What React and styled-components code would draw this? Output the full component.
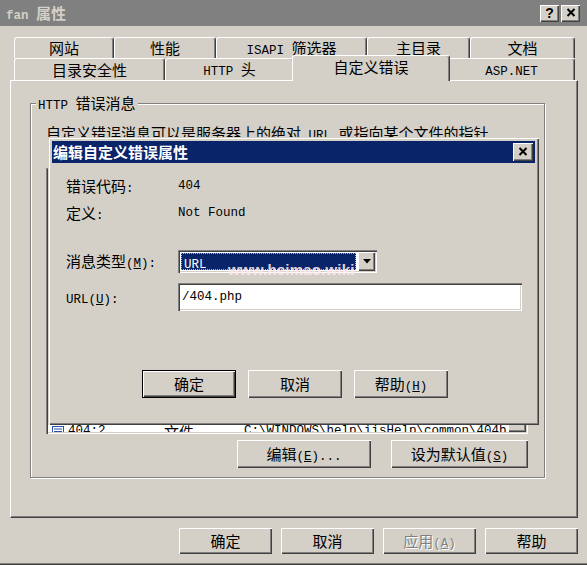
import React from 'react';
import styled, { createGlobalStyle } from 'styled-components';

const GlobalStyle = createGlobalStyle`
  * { box-sizing: border-box; }
  html, body { margin: 0; padding: 0; background: #d4d0c8; }
  body {
    font-family: "Noto Sans CJK SC", "Liberation Sans", sans-serif;
    font-size: 15px;
    color: #000;
  }
`;

const raised = `
  box-shadow: inset 1px 1px 0 #fff, inset -1px -1px 0 #404040, inset -2px -2px 0 #808080;
`;
const sunken = `
  box-shadow: inset 1px 1px 0 #808080, inset 2px 2px 0 #404040, inset -1px -1px 0 #fff, inset -2px -2px 0 #d4d0c8;
`;

const Lat = styled.span`
  font-family: "Liberation Mono", "DejaVu Sans Mono", monospace;
  font-size: 12.5px;
  line-height: 1;
`;

const Window = styled.div`
  position: relative;
  width: 587px;
  height: 565px;
  background: #d4d0c8;
  box-shadow: inset 0 -1px 0 #404040, inset 0 -2px 0 #808080;
  overflow: hidden;
`;

const TitleBar = styled.div`
  height: 26px;
  background: #808080;
  display: flex;
  align-items: center;
  justify-content: space-between;
  padding: 0 7px 0 6px;
`;

const TitleText = styled.div`
  color: #d4d0c8;
  font-weight: bold;
  line-height: 18px;
`;

const CapButtons = styled.div`
  display: flex;
  gap: 2px;
`;

const CapButton = styled.div`
  width: 19px;
  height: 17px;
  background: #d4d0c8;
  ${raised}
  display: flex;
  align-items: center;
  justify-content: center;
  font-family: "Liberation Sans", sans-serif;
  font-weight: bold;
  font-size: 14px;
  line-height: 1;
  padding-bottom: 1px;
`;

const TabStrip = styled.div`
  display: flex;
  flex-direction: column;
  margin-top: 11px;
  padding-left: 14px;
`;

const TabRow = styled.div`
  display: flex;
  height: ${p => p.h}px;
`;

const Tab = styled.div`
  position: relative;
  flex: none;
  width: ${p => p.w}px;
  display: flex;
  align-items: center;
  justify-content: center;
  line-height: 18px;
  white-space: nowrap;
  background: #d4d0c8;
  border-top: 1px solid #fff;
  border-left: 1px solid #fff;
  border-right: 1px solid #404040;
  box-shadow: inset -1px 0 0 #808080;
  border-radius: 3px 3px 0 0;
  ${p => p.active && `
    z-index: 2;
    height: calc(100% + 4px);
    margin: -3px -2px -1px;
    padding-bottom: 4px;
  `}
`;

const Panel = styled.div`
  margin-left: 10px;
  width: 568px;
  height: 438px;
  border-top: 1px solid #fff;
  border-left: 1px solid #fff;
  border-right: 1px solid #404040;
  border-bottom: 1px solid #404040;
  box-shadow: inset -1px -1px 0 #808080;
  padding: 22px 32px 39px 19px;
  display: flex;
`;

const Group = styled.div`
  flex: 1;
  min-width: 0;
  border: 1px solid #808080;
  box-shadow: inset 1px 1px 0 #fff, 1px 1px 0 #fff;
  display: flex;
  flex-direction: column;
  padding: 0 16px 9px 15px;
`;

const Legend = styled.div`
  align-self: flex-start;
  height: 18px;
  margin: -10px 0 0 -10px;
  padding: 0 2px;
  background: #d4d0c8;
  line-height: 18px;
  white-space: nowrap;
`;

const Intro = styled.div`
  height: 18px;
  margin-top: 12px;
  line-height: 18px;
  white-space: nowrap;
`;

const ListView = styled.div`
  margin-top: 26px;
  height: 266px;
  flex: none;
  background: #fff;
  ${sunken}
  padding: 2px;
  display: flex;
  overflow: hidden;
`;

const ListMain = styled.div`
  flex: 1;
  min-width: 0;
  display: flex;
  flex-direction: column;
  overflow: hidden;
`;

const ListHeader = styled.div`
  display: flex;
  flex: none;
  height: 24px;
`;

const HeaderCell = styled.div`
  flex: ${p => (p.w ? 'none' : '1')};
  width: ${p => (p.w ? `${p.w}px` : 'auto')};
  background: #d4d0c8;
  ${raised}
  padding-left: 6px;
  line-height: 24px;
  white-space: nowrap;
`;

const ListRow = styled.div`
  display: flex;
  flex: none;
  height: 19px;
  line-height: 19px;
  white-space: nowrap;
  background: ${p => (p.selected ? '#0a246a' : '#fff')};
  color: ${p => (p.selected ? '#fff' : '#000')};
`;

const Cell = styled.div`
  flex: ${p => (p.w ? 'none' : '1')};
  width: ${p => (p.w ? `${p.w}px` : 'auto')};
  min-width: 0;
  display: flex;
  align-items: center;
  gap: 4px;
  padding-left: ${p => p.pl || 6}px;
  overflow: hidden;
`;

const VScroll = styled.div`
  width: 18px;
  flex: none;
  background: #e8e6e2;
  display: flex;
  flex-direction: column;
  justify-content: space-between;
`;

const ScrollPart = styled.div`
  height: ${p => p.h}px;
  background: #d4d0c8;
  ${raised}
`;

const ButtonRow = styled.div`
  display: flex;
  justify-content: ${p => (p.left ? 'flex-start' : 'flex-end')};
  gap: ${p => p.gap}px;
  margin-top: ${p => p.mt || 0}px;
  padding-left: ${p => p.pl || 0}px;
`;

const Button = styled.button`
  width: ${p => p.w}px;
  height: ${p => p.h}px;
  flex: none;
  padding: 0;
  margin: 0;
  border: ${p => (p.primary ? '1px solid #000' : 'none')};
  background: #d4d0c8;
  ${raised}
  font: inherit;
  font-size: 15px;
  line-height: 18px;
  color: ${p => (p.disabled ? '#808080' : '#000')};
  text-shadow: ${p => (p.disabled ? '1px 1px 0 #fff' : 'none')};
  white-space: nowrap;
`;

const Dialog = styled.div`
  position: absolute;
  left: 48px;
  top: 137px;
  width: 491px;
  height: 288px;
  background: #d4d0c8;
  box-shadow: inset 1px 1px 0 #d4d0c8, inset 2px 2px 0 #fff, inset -1px -1px 0 #404040, inset -2px -2px 0 #808080;
  padding: 4px;
  display: flex;
  flex-direction: column;
`;

const DlgTitle = styled.div`
  height: 22px;
  flex: none;
  background: #0a246a;
  color: #fff;
  font-weight: bold;
  display: flex;
  align-items: center;
  justify-content: space-between;
  padding: 0 2px 0 1px;
  line-height: 18px;
`;

const DlgBody = styled.div`
  padding: 13px 13px 0 14px;
  display: flex;
  flex-direction: column;
`;

const Field = styled.div`
  display: grid;
  grid-template-columns: 112px 1fr;
  align-items: center;
  height: ${p => p.h}px;
  margin-top: ${p => p.mt || 0}px;
  line-height: 18px;
  white-space: nowrap;
`;

const Combo = styled.div`
  width: 199px;
  height: 23px;
  background: #fff;
  ${sunken}
  padding: 2px;
  display: flex;
`;

const ComboValue = styled.div`
  flex: 1;
  margin: 1px 2px 1px 1px;
  background: #0a246a;
  color: #fff;
  outline: 1px dotted #c8b878;
  outline-offset: -1px;
  line-height: 17px;
  padding-left: 3px;
`;

const DropButton = styled.div`
  width: 17px;
  flex: none;
  background: #d4d0c8;
  ${raised}
  display: flex;
  align-items: center;
  justify-content: center;
`;

const TextBox = styled.div`
  height: 28px;
  background: #fff;
  ${sunken}
  display: flex;
  align-items: center;
  padding-left: 4px;
`;

const Watermark = styled.div`
  position: absolute;
  left: 180px;
  top: 124px;
  font-family: "Liberation Sans", sans-serif;
  font-weight: bold;
  font-size: 15px;
  line-height: 18px;
  color: rgba(255, 232, 236, 0.9);
  letter-spacing: 0.2px;
  white-space: nowrap;
`;

const Footer = styled.div`
  display: flex;
  justify-content: flex-end;
  gap: 9px;
  margin-top: 10px;
  padding-right: 9px;
`;

const CloseGlyph = () => (
  <svg width="10" height="9" viewBox="0 0 10 9">
    <path d="M1.5 1 L8.5 8 M8.5 1 L1.5 8" stroke="#000" strokeWidth="2" fill="none" />
  </svg>
);

const DownArrow = () => (
  <svg width="8" height="5" viewBox="0 0 8 5">
    <path d="M0 0 H8 L4 4.5 Z" fill="#000" />
  </svg>
);

const PageIcon = () => (
  <svg width="12" height="12" viewBox="0 0 12 12">
    <rect x="0.5" y="0.5" width="11" height="11" fill="#fff" stroke="#2850b0" />
    <path d="M2 3 H10 M2 5.5 H10 M2 8 H10" stroke="#2850b0" />
  </svg>
);

const rows = [
  ['403;9', '文件', 'C:\\WINDOWS\\help\\iisHelp\\common\\403-9.htm'],
  ['403;10', '文件', 'C:\\WINDOWS\\help\\iisHelp\\common\\403-10.htm'],
  ['403;11', '文件', 'C:\\WINDOWS\\help\\iisHelp\\common\\403-11.htm'],
  ['403;12', '文件', 'C:\\WINDOWS\\help\\iisHelp\\common\\403-12.htm'],
  ['403;13', '文件', 'C:\\WINDOWS\\help\\iisHelp\\common\\403-13.htm'],
  ['403;14', '文件', 'C:\\WINDOWS\\help\\iisHelp\\common\\403-14.htm'],
  ['403;15', '文件', 'C:\\WINDOWS\\help\\iisHelp\\common\\403-15.htm'],
  ['403;16', '文件', 'C:\\WINDOWS\\help\\iisHelp\\common\\403-16.htm'],
  ['403;17', '文件', 'C:\\WINDOWS\\help\\iisHelp\\common\\403-17.htm'],
  ['403;18', '文件', 'C:\\WINDOWS\\help\\iisHelp\\common\\403.htm'],
  ['403;19', '文件', 'C:\\WINDOWS\\help\\iisHelp\\common\\403.htm'],
  ['404', 'URL', '/404.php', true],
  ['404;2', '文件', 'C:\\WINDOWS\\help\\iisHelp\\common\\404b.htm'],
  ['404;3', '文件', 'C:\\WINDOWS\\help\\iisHelp\\common\\404b.htm'],
];

const topTabs = [
  ['网站', 100],
  ['性能', 102],
  [<><Lat>ISAPI </Lat>筛选器</>, 151],
  ['主目录', 103],
  ['文档', 105],
];

const App = () => (
  <>
    <GlobalStyle />
    <Window>
      <TitleBar>
        <TitleText><Lat style={{ fontWeight: 'bold' }}>fan </Lat>属性</TitleText>
        <CapButtons>
          <CapButton>?</CapButton>
          <CapButton><CloseGlyph /></CapButton>
        </CapButtons>
      </TitleBar>

      <TabStrip>
        <TabRow h={21}>
          {topTabs.map(([label, w], i) => (
            <Tab key={i} w={w}><span>{label}</span></Tab>
          ))}
        </TabRow>
        <TabRow h={22}>
          <Tab w={151}><span>目录安全性</span></Tab>
          <Tab w={129}><span><Lat>HTTP </Lat>头</span></Tab>
          <Tab w={158} active><span>自定义错误</span></Tab>
          <Tab w={127}><span><Lat>ASP.NET</Lat></span></Tab>
        </TabRow>
      </TabStrip>

      <Panel>
        <Group>
          <Legend><Lat>HTTP </Lat>错误消息</Legend>
          <Intro>自定义错误消息可以是服务器上的绝对<Lat> URL </Lat>或指向某个文件的指针</Intro>
          <ListView>
            <ListMain>
              <ListHeader>
                <HeaderCell w={110}><Lat>HTTP </Lat>错误</HeaderCell>
                <HeaderCell w={80}>类型</HeaderCell>
                <HeaderCell>内容</HeaderCell>
              </ListHeader>
              {rows.map(([code, type, content, sel]) => (
                <ListRow key={code} selected={sel}>
                  <Cell w={110} pl={4}><PageIcon /><Lat>{code}</Lat></Cell>
                  <Cell w={80}>{type === 'URL' ? <Lat>URL</Lat> : type}</Cell>
                  <Cell><Lat>{content}</Lat></Cell>
                </ListRow>
              ))}
            </ListMain>
            <VScroll>
              <ScrollPart h={17} />
              <ScrollPart h={22} />
            </VScroll>
          </ListView>
          <ButtonRow gap={20} mt={6}>
            <Button w={134} h={28}>编辑<Lat>(<u>E</u>)...</Lat></Button>
            <Button w={137} h={28}>设为默认值<Lat>(<u>S</u>)</Lat></Button>
          </ButtonRow>
        </Group>
      </Panel>

      <Footer>
        <Button w={93} h={26}>确定</Button>
        <Button w={93} h={26}>取消</Button>
        <Button w={93} h={26} disabled>应用<Lat>(<u>A</u>)</Lat></Button>
        <Button w={93} h={26}>帮助</Button>
      </Footer>

      <Dialog>
        <DlgTitle>
          <span>编辑自定义错误属性</span>
          <CapButton style={{ width: 20, height: 18 }}><CloseGlyph /></CapButton>
        </DlgTitle>
        <DlgBody>
          <Field h={20}>
            <span>错误代码<Lat>:</Lat></span>
            <Lat>404</Lat>
          </Field>
          <Field h={20} mt={7}>
            <span>定义<Lat>:</Lat></span>
            <Lat>Not Found</Lat>
          </Field>
          <Field h={23} mt={27}>
            <span>消息类型<Lat>(<u>M</u>):</Lat></span>
            <Combo>
              <ComboValue><Lat>URL</Lat></ComboValue>
              <DropButton><DownArrow /></DropButton>
            </Combo>
          </Field>
          <Field h={28} mt={10}>
            <span><Lat>URL(<u>U</u>):</Lat></span>
            <TextBox><Lat>/404.php</Lat></TextBox>
          </Field>
          <ButtonRow gap={12} mt={59} pl={76} left>
            <Button w={94} h={28} primary>确定</Button>
            <Button w={94} h={28}>取消</Button>
            <Button w={94} h={28}>帮助<Lat>(<u>H</u>)</Lat></Button>
          </ButtonRow>
        </DlgBody>
        <Watermark>www.heimao.wiki</Watermark>
      </Dialog>
    </Window>
  </>
);

export default App;
